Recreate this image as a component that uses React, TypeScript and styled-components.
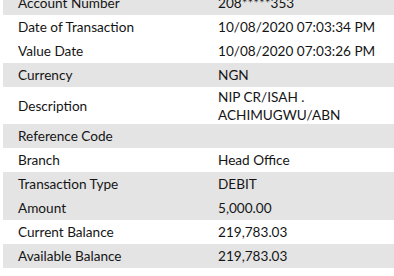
import React from "react";
import styled, { createGlobalStyle } from "styled-components";

interface Detail {
  label: string;
  value: string;
  shaded?: boolean;
}

const details: Detail[] = [
  { label: "Account Number", value: "208*****353", shaded: true },
  { label: "Date of Transaction", value: "10/08/2020 07:03:34 PM" },
  { label: "Value Date", value: "10/08/2020 07:03:26 PM" },
  { label: "Currency", value: "NGN", shaded: true },
  { label: "Description", value: "NIP CR/ISAH . ACHIMUGWU/ABN" },
  { label: "Reference Code", value: "", shaded: true },
  { label: "Branch", value: "Head Office" },
  { label: "Transaction Type", value: "DEBIT", shaded: true },
  { label: "Amount", value: "5,000.00", shaded: true },
  { label: "Current Balance", value: "219,783.03" },
  { label: "Available Balance", value: "219,783.03", shaded: true },
];

const App = () => {
  return (
    <>
      <GlobalStyle />
      <DetailTable>
        {details.map((d) => (
          <DetailRow key={d.label} $shaded={d.shaded}>
            <Label>{d.label}</Label>
            <Value>{d.value}</Value>
          </DetailRow>
        ))}
      </DetailTable>
    </>
  );
};

export default App;

const GlobalStyle = createGlobalStyle`
  body {
    margin: 0;
    background: #ffffff;
    font-family: Lato, "Open Sans", sans-serif;
    overflow: hidden;
  }
`;

const DetailTable = styled.div`
  display: flex;
  flex-direction: column;
  margin: -9px 0 0 3px;
`;

const DetailRow = styled.div<{ $shaded?: boolean }>`
  display: grid;
  grid-template-columns: 200px 1fr;
  align-items: center;
  min-height: 24px;
  padding: 0.5px 0;
  box-sizing: border-box;
  background-color: ${(p) => (p.$shaded ? "#e4e4e4" : "#ffffff")};
  font-size: 13.6px;
  line-height: 18px;
  color: #151515;
`;

const Label = styled.div`
  padding-left: 15px;
`;

const Value = styled.div`
  padding-left: 15px;
`;
